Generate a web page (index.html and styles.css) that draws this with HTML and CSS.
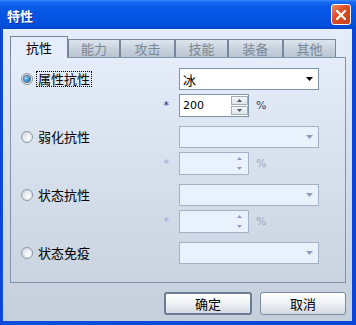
FILE: index.html
```html
<!DOCTYPE html>
<html lang="zh-CN">
<head>
    <meta charset="UTF-8">
    <title>特性</title>
    <link rel="stylesheet" href="styles.css">
</head>
<body>

    <div class="window">
        <div class="titlebar">
            <span class="title">特性</span>
            <span class="close">
                <svg width="10" height="10" viewBox="0 0 10 10"><path d="M1 1L9 9M9 1L1 9" stroke="#fff" stroke-width="2.2" stroke-linecap="square"/></svg>
            </span>
        </div>

        <div class="client">
            <div class="tabs">
                <div class="tab active">抗性</div>
                <div class="tab w52">能力</div>
                <div class="tab w55">攻击</div>
                <div class="tab w53">技能</div>
                <div class="tab w55">装备</div>
                <div class="tab w53">其他</div>
            </div>

            <div class="panel">
                <div class="group">
                    <div class="opt"><span class="radio on"></span><span class="lbl focus">属性抗性</span></div>
                    <div class="select">冰<svg class="arrow" width="7" height="4" viewBox="0 0 7 4"><path d="M0 0H7L3.5 4Z" fill="#000"/></svg></div>
                    <span class="star">*</span>
                    <div class="spin-row">
                        <div class="spin">200
                            <div class="spin-btns">
                                <span class="sbtn"><svg width="5" height="3" viewBox="0 0 5 3"><path d="M2.5 0L5 3H0Z" fill="#4b5768"/></svg></span>
                                <span class="sbtn"><svg width="5" height="3" viewBox="0 0 5 3"><path d="M0 0H5L2.5 3Z" fill="#4b5768"/></svg></span>
                            </div>
                        </div>
                        <span class="pct">%</span>
                    </div>
                </div>

                <div class="group">
                    <div class="opt"><span class="radio"></span><span class="lbl">弱化抗性</span></div>
                    <div class="select off"><span></span><svg class="arrow" width="7" height="4" viewBox="0 0 7 4"><path d="M0 0H7L3.5 4Z" fill="#9399c2"/></svg></div>
                    <span class="star off">*</span>
                    <div class="spin-row">
                        <div class="spin off">
                            <div class="spin-btns">
                                <span class="sbtn"><svg width="5" height="3" viewBox="0 0 5 3"><path d="M2.5 0L5 3H0Z" fill="#9399c2"/></svg></span>
                                <span class="sbtn"><svg width="5" height="3" viewBox="0 0 5 3"><path d="M0 0H5L2.5 3Z" fill="#9399c2"/></svg></span>
                            </div>
                        </div>
                        <span class="pct off">%</span>
                    </div>
                </div>

                <div class="group">
                    <div class="opt"><span class="radio"></span><span class="lbl">状态抗性</span></div>
                    <div class="select off"><span></span><svg class="arrow" width="7" height="4" viewBox="0 0 7 4"><path d="M0 0H7L3.5 4Z" fill="#9399c2"/></svg></div>
                    <span class="star off">*</span>
                    <div class="spin-row">
                        <div class="spin off">
                            <div class="spin-btns">
                                <span class="sbtn"><svg width="5" height="3" viewBox="0 0 5 3"><path d="M2.5 0L5 3H0Z" fill="#9399c2"/></svg></span>
                                <span class="sbtn"><svg width="5" height="3" viewBox="0 0 5 3"><path d="M0 0H5L2.5 3Z" fill="#9399c2"/></svg></span>
                            </div>
                        </div>
                        <span class="pct off">%</span>
                    </div>
                </div>

                <div class="group">
                    <div class="opt"><span class="radio"></span><span class="lbl">状态免疫</span></div>
                    <div class="select off"><span></span><svg class="arrow" width="7" height="4" viewBox="0 0 7 4"><path d="M0 0H7L3.5 4Z" fill="#9399c2"/></svg></div>
                </div>
            </div>

            <div class="actions">
                <button class="btn default">确定</button>
                <button class="btn">取消</button>
            </div>
        </div>
    </div>

</body>
</html>
```

FILE: styles.css
```css
body { margin: 0; font-family: "Noto Sans CJK SC", sans-serif; font-size: 13px; color: #000; }
.window { width: 356px; height: 325px; display: flex; flex-direction: column; background: linear-gradient(90deg, #0a3fd2, #0b4ee0 2px, #0845d8); }

.titlebar { height: 29px; flex: none; display: flex; align-items: center; justify-content: space-between; padding: 0 5px 0 7px; background: linear-gradient(#3b8cfa 0, #1a6af0 2px, #0a5ce8 6px, #0555e4 50%, #0350dd 85%, #0245cf 100%); }
.title { color: #fff; font-weight: bold; font-size: 13px; line-height: 14px; margin-top: 3px; text-shadow: 1px 1px #0b2a96; }
.close { width: 20px; height: 21px; box-sizing: border-box; border: 1px solid #fff; border-radius: 3px; background: linear-gradient(135deg, #ee8a62, #dc4d22 45%, #c8401a); display: flex; align-items: center; justify-content: center; }

.client { flex: 1; margin: 0 4px 4px 3px; padding: 7px 6px 0 7px; background: linear-gradient(#e4edf9, #c4cfdb); display: flex; flex-direction: column; }

.tabs { display: flex; align-items: flex-end; height: 21px; }
.tab { height: 18px; box-sizing: border-box; border: 1px solid #75869c; border-bottom: none; background: linear-gradient(#dde5ee, #c9d3de 50%, #b9c5d2); color: #7b8797; display: flex; align-items: center; justify-content: center; line-height: 14px; }
.tab.active { width: 58px; height: 22px; margin-bottom: -1px; position: relative; z-index: 1; background: #e4edf9; color: #000; padding-top: 1px; }
.w52 { width: 52px; }
.w53 { width: 53px; }
.w55 { width: 55px; }

.panel { height: 226px; box-sizing: border-box; border: 1px solid #8094ac; background: linear-gradient(#e4edf9, #c9d4e0); padding: 10px 0 0 10px; }

.group { display: grid; grid-template-columns: 158px 140px; row-gap: 4px; align-items: center; }
.group + .group { margin-top: 9px; }

.opt { display: flex; align-items: center; }
.radio { width: 12px; height: 12px; box-sizing: border-box; border-radius: 50%; border: 1px solid #8a96a6; background: radial-gradient(circle at 65% 65%, #ffffff, #e6e8ec 50%, #c9ccd2); margin-right: 3px; position: relative; }
.radio.on::after { content: ""; position: absolute; left: 2px; top: 2px; width: 6px; height: 6px; border-radius: 50%; background: radial-gradient(circle at 35% 35%, #a6e0ff, #2a86cc 55%, #11508f); box-shadow: 0 0 0 1px #5c6f86; }
.lbl { line-height: 14px; padding: 0 1px; border: 1px dotted transparent; }
.lbl.focus { border-color: #000; }

.select { width: 140px; height: 22px; box-sizing: border-box; border: 1px solid #7f93aa; background: #fff; display: flex; align-items: center; justify-content: space-between; padding: 0 5px 0 3px; }
.select.off { background: #e9f2fc; border-color: #a2b2c6; }

.star { justify-self: end; padding-right: 10px; font-family: "DejaVu Sans", sans-serif; font-size: 11px; color: #1d2c5e; }
.star.off { color: #a0a8d2; }

.spin-row { display: flex; align-items: center; }
.spin { width: 70px; height: 23px; box-sizing: border-box; border: 1px solid #7f93aa; background: #fff; display: flex; align-items: center; padding-left: 3px; font-family: "DejaVu Sans", sans-serif; font-size: 11px; }
.spin.off { background: #e9f2fc; border-color: #a2b2c6; }
.spin-btns { margin-left: auto; width: 17px; height: 21px; box-sizing: border-box; padding: 1px 0; display: flex; flex-direction: column; gap: 1px; }
.sbtn { flex: 1; box-sizing: border-box; border: 1px solid #a3aebd; background: linear-gradient(#f6f8fa, #dfe4ea); display: flex; align-items: center; justify-content: center; }
.off .sbtn { border-color: transparent; background: none; }
.pct { margin-left: 7px; font-family: "DejaVu Sans", sans-serif; font-size: 11px; color: #2c3c6c; }
.pct.off { color: #9aa3c8; }

.actions { display: flex; justify-content: flex-end; gap: 8px; margin-top: 9px; }
.btn { width: 86px; height: 23px; padding: 0; font-family: "Noto Sans CJK SC", sans-serif; font-size: 13px; color: #000; border: 1px solid #7a8aa0; border-radius: 3px; background: linear-gradient(#ffffff, #f0f2f5 45%, #d5dae1); }
.btn.default { width: 88px; border: 2px solid #6b7c96; }
```
